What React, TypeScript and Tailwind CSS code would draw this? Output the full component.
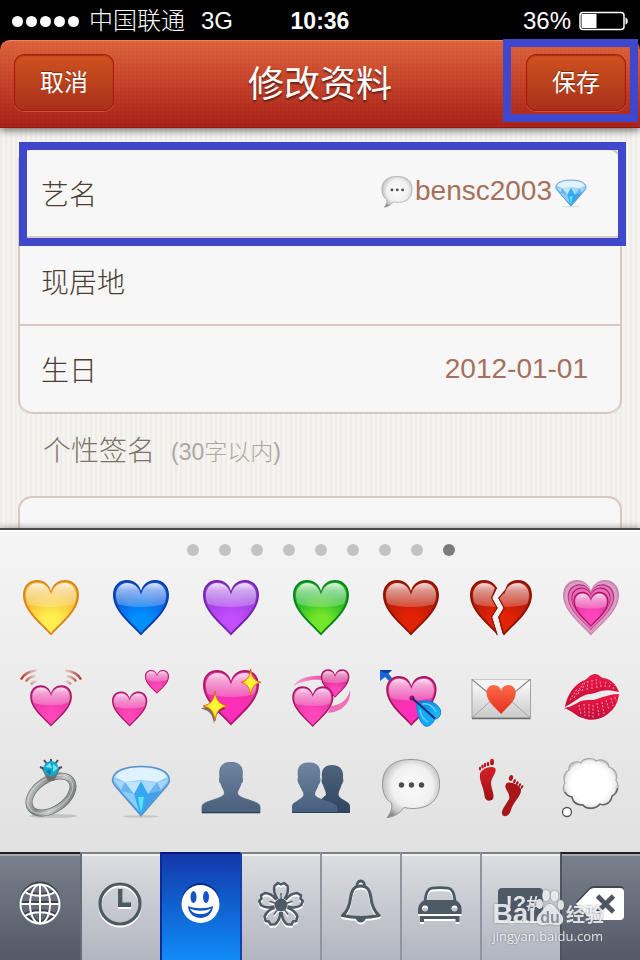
import { useId, type ReactNode } from "react";

type Palette = { edge: string; mid: string; glow: string };

const YELLOW: Palette = { edge: "#d9851a", mid: "#f3b82c", glow: "#ffee50" };
const BLUE: Palette = { edge: "#0a3cab", mid: "#0b5ce0", glow: "#0090fc" };
const PURPLE: Palette = { edge: "#7324ab", mid: "#9a3fdf", glow: "#c34cfb" };
const GREEN: Palette = { edge: "#0a841a", mid: "#18b422", glow: "#74e62a" };
const RED: Palette = { edge: "#8c1406", mid: "#b51a06", glow: "#e22205" };
const PINK: Palette = { edge: "#a4185f", mid: "#e637a4", glow: "#ff46ba" };

const HEART = "M32 60.5C24 51 4 37 4 20C4 11 10 5 18 5C25 5 30 9 32 16C34 9 39 5 46 5C54 5 60 11 60 20C60 37 40 51 32 60.5Z";
const HEART_INNER = "M32 58C25 49 6 36 6 20C6 12 11 7 18 7C25 7 30 11 32 19C34 11 39 7 46 7C53 7 58 12 58 20C58 36 39 49 32 58Z";
const HEART_GLOSS = "M7 20C7 13 12 8 18 8C25 8 30 12 32 20C34 12 39 8 46 8C52 8 57 13 57 20C57 24 56 27 55 29C44 33 20 33 9 29C8 27 7 24 7 20Z";

function HeartShape({ palette, transform }: { palette: Palette; transform?: string }) {
  const id = useId();
  return (
    <g transform={transform}>
      <defs>
        <radialGradient id={`${id}b`} cx="32" cy="48" r="32" gradientUnits="userSpaceOnUse">
          <stop offset="0" stopColor={palette.glow} />
          <stop offset="0.25" stopColor={palette.glow} />
          <stop offset="1" stopColor={palette.mid} />
        </radialGradient>
        <linearGradient id={`${id}g`} x1="0" y1="0" x2="0" y2="1">
          <stop offset="0" stopColor="#fff" stopOpacity="0.85" />
          <stop offset="0.3" stopColor="#fff" stopOpacity="0.55" />
          <stop offset="1" stopColor="#fff" stopOpacity="0.2" />
        </linearGradient>
      </defs>
      <path d={HEART} fill={palette.edge} />
      <path d={HEART_INNER} fill={`url(#${id}b)`} />
      <path d={HEART_GLOSS} fill={`url(#${id}g)`} />
    </g>
  );
}

function Art({ children, className = "w-16 h-16" }: { children: ReactNode; className?: string }) {
  return (
    <svg viewBox="0 0 64 64" className={`shrink-0 ${className}`} aria-hidden="true">
      {children}
    </svg>
  );
}

function BrokenHeart() {
  return (
    <Art>
      <defs>
        <clipPath id="crackLeft">
          <path d="M0 0H23L28 13L23 23L28.6 33L23 42L28.6 60V64H0Z" />
        </clipPath>
        <clipPath id="crackRight">
          <path d="M64 0H42L36 15L29.3 23L34.7 33L29.3 42L35 64H64Z" />
        </clipPath>
      </defs>
      <g clipPath="url(#crackLeft)">
        <HeartShape palette={RED} transform="translate(-3 0)" />
        <path d="M27.5 12L23 23L28.6 33L23 42L28.6 60" fill="none" stroke="#8c1406" strokeWidth="2" />
      </g>
      <g clipPath="url(#crackRight)">
        <HeartShape palette={RED} transform="translate(3 0)" />
        <path d="M36 15L29.3 23L34.7 33L29.3 42L34 58" fill="none" stroke="#8c1406" strokeWidth="2" />
      </g>
    </Art>
  );
}

function GrowingHeart() {
  return (
    <Art>
      <path d={HEART} fill="#c986ae" />
      <path d={HEART} fill="#df9cc5" transform="translate(2 2) scale(.94)" />
      <path d={HEART} fill="#a93a7c" transform="translate(5.4 5) scale(.83)" />
      <path d={HEART} fill="#e774ba" transform="translate(6.6 6.5) scale(.79)" />
      <path d={HEART} fill="#a6246d" transform="translate(9.6 9) scale(.7)" />
      <path d={HEART} fill="#ee6cba" transform="translate(10.6 10.4) scale(.67)" />
      <HeartShape palette={PINK} transform="translate(11.8 13.6) scale(.63)" />
    </Art>
  );
}

function BeatingHeart() {
  return (
    <Art>
      <defs>
        <linearGradient id="beatL">
          <stop offset="0" stopColor="#b03425" />
          <stop offset="1" stopColor="#b03425" stopOpacity="0.1" />
        </linearGradient>
        <linearGradient id="beatR">
          <stop offset="0" stopColor="#b03425" stopOpacity="0.1" />
          <stop offset="1" stopColor="#b03425" />
        </linearGradient>
      </defs>
      <g fill="none" stroke="url(#beatL)" strokeWidth="2.4">
        <path d="M2 14.5C5 9 11 6 18 5.5" />
        <path d="M7 16.5C9 13 12.5 11.5 17 11" strokeOpacity="0.75" />
        <path d="M12 19.5C13.5 17.5 15 16.5 18 16.2" strokeOpacity="0.5" />
      </g>
      <g fill="none" stroke="url(#beatR)" strokeWidth="2.4">
        <path d="M62 14.5C59 9 53 6 46 5.5" />
        <path d="M57 16.5C55 13 51.5 11.5 47 11" strokeOpacity="0.75" />
        <path d="M52 19.5C50.5 17.5 49 16.5 46 16.2" strokeOpacity="0.5" />
      </g>
      <HeartShape palette={PINK} transform="translate(8.2 16.5) scale(.745)" />
    </Art>
  );
}

function TwoHearts() {
  return (
    <Art>
      <HeartShape palette={PINK} transform="translate(34.2 2.8) scale(.43)" />
      <HeartShape palette={PINK} transform="translate(.5 23.4) scale(.63)" />
    </Art>
  );
}

function SparklingHeart() {
  return (
    <Art>
      <defs>
        <radialGradient id="spark">
          <stop offset="0" stopColor="#fffb3a" />
          <stop offset="0.6" stopColor="#ffe82a" />
          <stop offset="1" stopColor="#f08a10" />
        </radialGradient>
      </defs>
      <HeartShape palette={{ ...PINK, edge: "#b0196b", glow: "#ff2dbb" }} />
      <path d="M16 27C17.5 37 20 40 28 42.5C20 45 17.5 48 16 58C14.5 48 12 45 3 42.5C12 40 14.5 37 16 27Z" fill="#3d1710" opacity=".6" transform="translate(-1 1)" />
      <path d="M16 26C17.5 36 20 39 29 41C20 43 17.5 46 16 56C14.5 46 12 43 4 41C12 39 14.5 36 16 26Z" fill="url(#spark)" stroke="#d9660f" strokeWidth=".9" />
      <path d="M51.7 4C53 13 55 15.5 62 17.3C55 19 53 22 51.7 31C50.4 22 48 19 42 17.3C48 15.5 50.4 13 51.7 4Z" fill="url(#spark)" stroke="#d9660f" strokeWidth=".9" />
    </Art>
  );
}

function RevolvingHearts() {
  return (
    <Art>
      <defs>
        <linearGradient id="ribbon">
          <stop offset="0" stopColor="#f4a3cf" />
          <stop offset="1" stopColor="#ee4fae" />
        </linearGradient>
      </defs>
      <path d="M4 21.7C9 13 21 10 33 11V15C22 14 12 16 4 21.7Z" fill="url(#ribbon)" />
      <path d="M61 25C63 37 52 48 39 47.7L42 41C51 40 59 35 61 25Z" fill="#ee6fb9" />
      <HeartShape palette={{ ...PINK, mid: "#cf2488" }} transform="translate(29.8 1.8) scale(.51)" />
      <HeartShape palette={PINK} transform="translate(.3 17.5) scale(.735)" />
    </Art>
  );
}

function CupidHeart() {
  return (
    <Art>
      <defs>
        <linearGradient id="feather" x1="0" y1="0" x2="1" y2="1">
          <stop offset="0" stopColor="#0a78dc" />
          <stop offset="1" stopColor="#1fc4ff" />
        </linearGradient>
      </defs>
      <path d="M1 5H13L9.500 8.500L13 13L10 16L6 12L1 16Z" fill="#1767dc" />
      <path d="M1 5H13L9 8L5 8Z" fill="#0a3da0" />
      <HeartShape palette={{ ...PINK, glow: "#ff2dbb" }} transform="translate(3.600 6.600) scale(.9)" />
      <circle cx="33" cy="33" r="2.600" fill="#a01565" />
      <path d="M38 38C44 34 56 35 61 44C63 49 60 54 56 54Z" fill="url(#feather)" stroke="#0b83d8" />
      <path d="M38 38C37 44 40 58 46 61C51 62 54 58 56 54Z" fill="#12a9fa" stroke="#0b83d8" />
      <path d="M43 39C49 38 54 41 57 47M41 45C42 51 45 55 49 57" fill="none" stroke="#63d5ff" strokeWidth="1.5" />
      <path d="M33 33L56 53.5" stroke="#0a3278" strokeWidth="2" />
    </Art>
  );
}

function LoveLetter() {
  return (
    <Art>
      <defs>
        <linearGradient id="paper" x1="0" y1="0" x2="0" y2="1">
          <stop offset="0" stopColor="#fefefe" />
          <stop offset="1" stopColor="#c9c9c9" />
        </linearGradient>
        <linearGradient id="seal" x1="0" y1="0" x2="0" y2="1">
          <stop offset="0" stopColor="#ff6a48" />
          <stop offset="1" stopColor="#e0301c" />
        </linearGradient>
      </defs>
      <rect x="3" y="14.5" width="58.5" height="38.5" fill="url(#paper)" stroke="#a3a3a3" />
      <path d="M3 53L26 32M61 53L38 32" stroke="#a5a5a5" fill="none" />
      <path d="M3 14.5L30 37Q32 38.5 34 37L61 14.5" fill="#f4f4f4" stroke="#898989" strokeWidth="1.2" />
      <path d="M3 53.5H61.5" stroke="#6e6e6e" strokeWidth="1.5" />
      <path d={HEART} fill="url(#seal)" transform="translate(15.500 17.500) scale(.52)" />
    </Art>
  );
}

function KissMark() {
  return (
    <Art>
      <defs>
        <linearGradient id="lip" x1="0" y1="0" x2="0" y2="1">
          <stop offset="0" stopColor="#ec1848" />
          <stop offset="1" stopColor="#c20f3a" />
        </linearGradient>
      </defs>
      <path d="M6 42C8 30 15 19 26 15C29 13 32 9 36 9C40 9 41 12 44 13C52 14 57 19 60 27C55 26 50 24 42 26C37 27 35 29 30 29C22 30 14 38 6 42Z" fill="url(#lip)" />
      <path d="M5 43C12 42 16 39 22 36C28 34 33 36 38 34C46 31 53 29 60 29C59 39 54 46 46 51C40 55 30 56 24 53C18 52 14 46 5 43Z" fill="url(#lip)" />
      <g stroke="#ffc2cf" strokeWidth=".9" strokeDasharray="2 1.5" fill="none" opacity=".85">
        <path d="M11 35L18 24M15 33L21 23M19 29L24 18M23 26L26 17M28 25L29 16M33 24L33 14M38 23L37 12M42 22L41 15M46 22L47 16M50 22L52 18M54 24L56 20" />
        <path d="M20 40L22 49M25 39L26 51M30 39L30 52M34 40L34 53M38 38L40 51M43 37L45 49M47 35L50 45M52 33L54 41M56 32L57 36" />
      </g>
    </Art>
  );
}

function Ring() {
  return (
    <Art>
      <defs>
        <linearGradient id="silver" x1="0" y1="0" x2="1" y2="1">
          <stop offset="0" stopColor="#d4d7d5" />
          <stop offset="0.35" stopColor="#858a87" />
          <stop offset="0.6" stopColor="#c3c7c5" />
          <stop offset="1" stopColor="#686c6a" />
        </linearGradient>
      </defs>
      <ellipse cx="34" cy="61" rx="24" ry="2" fill="#000" opacity=".15" />
      <g transform="rotate(-34 32 39.5)">
        <ellipse cx="32" cy="39.5" rx="24.5" ry="15" fill="none" stroke="#6c716e" strokeWidth="7" />
        <ellipse cx="32" cy="39.5" rx="24.5" ry="15" fill="none" stroke="url(#silver)" strokeWidth="5.4" />
        <ellipse cx="31.5" cy="39" rx="25" ry="15.5" fill="none" stroke="#e9ebea" strokeWidth="1" opacity=".5" />
      </g>
      <path d="M22 12L29 26H35L42 12L38 15L32 19L26 15Z" fill="#6c706e" />
      <path d="M25 5L28 9M32 4V7M39 5L36 9M21 12L26 14M43 12L38 14" stroke="#4c4f4e" strokeWidth="2" />
      <circle cx="32" cy="13.5" r="7.5" fill="#12a9cf" />
      <path d="M26 12L31 8L33 13ZM34 9L39 13L34 17Z" fill="#6fe4f5" />
      <path d="M27 16L32 15L31 20Z" fill="#0673a0" />
    </Art>
  );
}

function Gem({ className }: { className?: string }) {
  const id = useId();
  return (
    <Art className={className}>
      <defs>
        <linearGradient id={id} x1="0" y1="0" x2="0" y2="1">
          <stop offset="0" stopColor="#cdeeff" />
          <stop offset="0.45" stopColor="#5cb8f4" />
          <stop offset="1" stopColor="#1fb4f5" />
        </linearGradient>
      </defs>
      <ellipse cx="32" cy="61.5" rx="18" ry="1.3" fill="#000" opacity=".12" />
      <path d="M3.5 25C4 15 18 11.5 32 11.5C46 11.5 60 15 60.5 25C60.5 28 58 30.500 56 33L32 60.5L8 33C6 30.500 3.500 28 3.500 25Z" fill={`url(#${id})`} stroke="#5b8fc9" strokeWidth="1.5" />
      <path d="M6 22C11 14 22 13 32 13C42 13 53 14 58 22L48 27L32 25L16 27Z" fill="#dff3ff" />
      <path d="M5 25L16 27L12 35Z" fill="#a8d5fa" />
      <path d="M59 25L48 27L52 35Z" fill="#a8d5fa" />
      <path d="M16 27L26 38L12 36Z" fill="#6cb5f1" />
      <path d="M48 27L38 38L52 36Z" fill="#6cb5f1" />
      <path d="M32 26L40 39L32 58L24 39Z" fill="#34a8f0" />
      <path d="M16 27L32 26L25 39Z" fill="#c2e4fb" />
      <path d="M48 27L32 26L39 39Z" fill="#a8d8f9" />
      <path d="M12 36L25 39L30 56Z" fill="#8ccdf8" />
      <path d="M52 36L39 39L34 56Z" fill="#439fe9" />
      <path d="M29 42H35L32 58Z" fill="#5ce2ff" />
    </Art>
  );
}

const BUST = "M3 58V52C3 49 6 47.5 11 46C18 43.5 25 42 25.5 38C25.500 35 23 33 22 28.5C20.500 28 20 24 21 22C19.500 12 23 7.500 32 7.500C41 7.500 44.500 12 43 22C44 24 43.500 28 42 28.5C41 33 38.500 35 38.500 38C39 42 46 43.500 53 46C58 47.500 61 49 61 52V58Z";

function Person() {
  return (
    <Art>
      <defs>
        <linearGradient id="bust" x1="0" y1="0" x2="0" y2="1">
          <stop offset="0" stopColor="#6f86a3" />
          <stop offset="1" stopColor="#475e7b" />
        </linearGradient>
      </defs>
      <path d={BUST} fill="url(#bust)" stroke="#52677f" strokeWidth=".8" />
      <path d="M3 57.5H61" stroke="#2d4059" />
    </Art>
  );
}

function People() {
  return (
    <Art>
      <defs>
        <linearGradient id="bustBack" x1="0" y1="0" x2="0" y2="1">
          <stop offset="0" stopColor="#4d637e" />
          <stop offset="1" stopColor="#30445e" />
        </linearGradient>
      </defs>
      <path d="M30 58V46L37 40C37 36 35 34 34 30C32.500 28 32 25 33 23C32 15 35 10 43 10C51 10 55 15 54 23C55 25 54 28 52.500 30C51.500 34 49.500 36 49.500 40C51 45 61 46 61 51V58Z" fill="url(#bustBack)" />
      <path d="M3 58V50C6 46 13 44 14.500 40C14.500 36 11.500 34 10.500 30C8.500 28 8 24 9 22C7.500 12 11 7.500 20 7.500C29 7.500 32.500 12 31 22C32 24 31.500 28 29.500 30C28.500 34 26 36 26 40C30 45 42 46 47 50C48.500 52 48.500 54 48.500 58Z" fill="url(#bust)" />
      <path d="M3 57.5H61" stroke="#2d4059" />
    </Art>
  );
}

function SpeechBubble({ className }: { className?: string }) {
  const id = useId();
  return (
    <Art className={className}>
      <defs>
        <radialGradient id={id} cx="0.52" cy="0.46" r="0.6">
          <stop offset="0" stopColor="#fcfcfc" />
          <stop offset="0.6" stopColor="#f0f0f0" />
          <stop offset="0.85" stopColor="#c4c4c4" />
          <stop offset="1" stopColor="#8c8c8c" />
        </radialGradient>
      </defs>
      <path d="M32 4.5C50 4.5 60.5 13 60.5 29C60.5 45 50 53.5 34 53.5C30 53.5 28 53 25 52.5C21 58 15 62 8 62.5C12 58 13.5 53 12.5 48C6 44 3.5 37 3.5 29C3.5 13 14 4.5 32 4.5Z" fill={`url(#${id})`} stroke="#969696" />
      <circle cx="22.5" cy="30" r="2.7" fill="#4d4d4d" />
      <circle cx="32.5" cy="30" r="2.7" fill="#4d4d4d" />
      <circle cx="42.5" cy="30" r="2.7" fill="#4d4d4d" />
    </Art>
  );
}

function Footprints() {
  return (
    <Art>
      <defs>
        <linearGradient id="foot" x1="0" y1="0" x2="0" y2="1">
          <stop offset="0" stopColor="#d81f26" />
          <stop offset="1" stopColor="#9c1117" />
        </linearGradient>
      </defs>
      <g fill="url(#foot)">
        <path d="M11 19C12 14 22 10 26 13C29 16 22 23 22 28C22 33 26 40 24 44C21 47 16 46 15.5 41C15 33 10 26 11 19Z" />
        <ellipse cx="23" cy="7" rx="2" ry="3.2" />
        <ellipse cx="19" cy="9" rx="1.3" ry="2.3" />
        <ellipse cx="16" cy="10" rx="1.2" ry="2.2" />
        <ellipse cx="13.5" cy="11.5" rx="1.2" ry="2.1" />
        <ellipse cx="11" cy="13.5" rx="1.1" ry="2" />
      </g>
      <g fill="#a8161c">
        <path d="M37 29C40 25 50 30 52 34C53 41 44 47 42 55C41 60 36 63 33.5 60C31 56 37 50 40 44C42 38 34 34 37 29Z" />
        <ellipse cx="42" cy="23" rx="2" ry="3" transform="rotate(20 42 23)" />
        <ellipse cx="45.5" cy="26" rx="1.2" ry="2.2" transform="rotate(25 45 26)" />
        <ellipse cx="48.2" cy="28" rx="1.2" ry="2.1" transform="rotate(30 48 28)" />
        <ellipse cx="50.7" cy="29.8" rx="1.1" ry="2" transform="rotate(30 50 30)" />
        <ellipse cx="53" cy="32" rx="1.1" ry="1.9" transform="rotate(30 53 32)" />
      </g>
    </Art>
  );
}

function ThoughtBubble() {
  return (
    <Art>
      <defs>
        <radialGradient id="cloud">
          <stop offset="0.7" stopColor="#fff" />
          <stop offset="0.9" stopColor="#f0f0f0" />
          <stop offset="1" stopColor="#c4c4c4" />
        </radialGradient>
      </defs>
      <path d="M22 8C24 3 34 2 37 6C43 3 50 7 50 12C57 14 59 21 57 25C61 31 59 39 53 41C53 48 45 52 41 49C36 56 26 54 24 50C17 51 13 47 13 42C5 41 2 33 6 28C3 21 7 16 10 15C9 8 17 5 22 8Z" fill="url(#cloud)" stroke="#a8a8a8" strokeWidth="1.2" />
      <path d="M6 37C8 41 10 41.500 13 42C14 47 18 50 24 50C27 54 36 55 41 49C46 51 52 48 53 41C57 39 58 36 58.500 33" fill="none" stroke="#5e5e5e" strokeWidth="1.3" />
      <circle cx="8" cy="57" r="4.5" fill="#fff" stroke="#555" strokeWidth="1.3" />
    </Art>
  );
}

const emojis: { label: string; art: ReactNode }[] = [
  { label: "黄心", art: <Art><HeartShape palette={YELLOW} /></Art> },
  { label: "蓝心", art: <Art><HeartShape palette={BLUE} /></Art> },
  { label: "紫心", art: <Art><HeartShape palette={PURPLE} /></Art> },
  { label: "绿心", art: <Art><HeartShape palette={GREEN} /></Art> },
  { label: "红心", art: <Art><HeartShape palette={RED} /></Art> },
  { label: "心碎", art: <BrokenHeart /> },
  { label: "搏动的心", art: <GrowingHeart /> },
  { label: "心跳", art: <BeatingHeart /> },
  { label: "两颗心", art: <TwoHearts /> },
  { label: "闪亮的心", art: <SparklingHeart /> },
  { label: "旋转的心", art: <RevolvingHearts /> },
  { label: "丘比特", art: <CupidHeart /> },
  { label: "情书", art: <LoveLetter /> },
  { label: "唇印", art: <KissMark /> },
  { label: "戒指", art: <Ring /> },
  { label: "钻石", art: <Gem /> },
  { label: "人影", art: <Person /> },
  { label: "两个人影", art: <People /> },
  { label: "对话气泡", art: <SpeechBubble /> },
  { label: "脚印", art: <Footprints /> },
  { label: "思想气泡", art: <ThoughtBubble /> },
];

function KeyIcon({ children, className }: { children: ReactNode; className: string }) {
  return (
    <svg viewBox="0 0 48 48" className={`w-12 h-12 overflow-visible ${className}`} aria-hidden="true">
      {children}
    </svg>
  );
}

const RAISED = "text-white drop-shadow-[0_-2px_0_rgba(0,0,0,0.4)]";
const ENGRAVED = "text-[#4e5966] drop-shadow-[0_2px_0_#fff]";
const LIGHT_KEY = "bg-linear-to-b from-[#dcdee2] to-[#b1b5bf] border-t-[#828282] shadow-[inset_0_2px_0_#f0f1f3]";
const DARK_KEY = "bg-linear-to-b from-[#7a818d] to-[#535966] border-t-[#222] shadow-[inset_0_2px_0_#a5a9b1]";

const keys: { label: string; style: string; icon: ReactNode }[] = [
  {
    label: "切换键盘",
    style: DARK_KEY,
    icon: (
      <KeyIcon className={RAISED}>
        <g fill="none" stroke="currentColor" strokeWidth="2">
          <circle cx="24" cy="24" r="19.5" />
          <ellipse cx="24" cy="24" rx="10" ry="19.5" />
          <path d="M24 4.5V43.5M4.5 24H43.5M9 12C16 17 32 17 39 12M9 36C16 31 32 31 39 36" />
        </g>
      </KeyIcon>
    ),
  },
  {
    label: "最近使用",
    style: `border-l-2 border-l-[#666c78] ${LIGHT_KEY}`,
    icon: (
      <KeyIcon className={ENGRAVED}>
        <circle cx="23" cy="24" r="20" fill="none" stroke="currentColor" strokeWidth="3.2" />
        <path d="M21 9H25.5V22.5H34V27H21Z" fill="currentColor" />
      </KeyIcon>
    ),
  },
  {
    label: "表情",
    style: "border-l-2 border-l-[#0c2b94] border-t-[#06187c] bg-linear-to-b from-[#1338ab] to-[#108bf7]",
    icon: (
      <KeyIcon className="text-white drop-shadow-[0_-2px_0_#0a2a80]">
        <circle cx="23.5" cy="24" r="19" fill="currentColor" />
        <ellipse cx="16.5" cy="17" rx="3" ry="6" fill="#1455c4" />
        <ellipse cx="29" cy="17" rx="3" ry="6" fill="#1455c4" />
        <path d="M11 26C18 29 29 29 36 26C36 33 30 38 23.5 38C17 38 11 33 11 26Z" fill="#1455c4" />
        <path d="M13 28.500C19 31.500 28 31.500 34 28.500C32 33 28 34 23.5 34C19 34 15 33 13 28.500Z" fill="#fff" />
      </KeyIcon>
    ),
  },
  {
    label: "自然",
    style: `border-l-2 border-l-[#153fa9] ${LIGHT_KEY}`,
    icon: (
      <KeyIcon className={ENGRAVED}>
        {[0, 72, 144, 216, 288].map((deg) => (
          <g key={deg} transform={`rotate(${deg} 24 25)`}>
            <path d="M20.5 19C17.5 15 16.5 10 17.5 6L21 3L24 4.5L27 3L30.5 6C31.5 10 30.5 15 27.5 19" fill="none" stroke="currentColor" strokeWidth="2.5" strokeLinejoin="round" />
            <path d="M24 20V13" stroke="currentColor" strokeWidth="1.4" />
          </g>
        ))}
        <circle cx="24" cy="25" r="6.5" fill="currentColor" />
      </KeyIcon>
    ),
  },
  {
    label: "物品",
    style: `border-l-2 border-l-[#8f949f] ${LIGHT_KEY}`,
    icon: (
      <KeyIcon className={ENGRAVED}>
        <path d="M20 7C19 -1 28.5 -1 27.5 7" fill="none" stroke="currentColor" strokeWidth="2.8" />
        <path d="M23.7 6C31 6 33 11 34 18C35 27 38 32 42 35.5C32 38 16 38 5.5 35.5C10 32 12.5 27 13.5 18C14.5 11 16.5 6 23.7 6Z" fill="none" stroke="currentColor" strokeWidth="3" strokeLinejoin="round" />
        <path d="M18.5 38H29C28 41 26 42.5 23.7 42.5C21.5 42.5 19.5 41 18.5 38Z" fill="currentColor" />
      </KeyIcon>
    ),
  },
  {
    label: "交通",
    style: `border-l-2 border-l-[#8f949f] ${LIGHT_KEY}`,
    icon: (
      <KeyIcon className={ENGRAVED}>
        <path d="M8 21C9 12 11 8.5 15 8.2C20 7.5 26 7.5 31 8.2C35 8.5 37 12 38 21" fill="none" stroke="currentColor" strokeWidth="2.8" />
        <path fillRule="evenodd" d="M8 20H38C43 22 44.7 26 44.7 30V34H1V30C1 26 3 22 8 20ZM8 25.5A3 3 0 1 0 8 31.5A3 3 0 1 0 8 25.5ZM37.5 25.5A3 3 0 1 0 37.5 31.5A3 3 0 1 0 37.5 25.5Z" fill="currentColor" />
        <path d="M3 36H42.5V42H38.5V39H7V42H3Z" fill="currentColor" />
      </KeyIcon>
    ),
  },
  {
    label: "符号",
    style: `border-l-2 border-l-[#8f949f] ${LIGHT_KEY}`,
    icon: (
      <KeyIcon className={ENGRAVED}>
        <rect x="1" y="8" width="45" height="33" rx="4" fill="currentColor" />
        <text x="25" y="31" textAnchor="middle" fontSize="22" fontWeight="700" fill="#e3e5e8">!?#</text>
      </KeyIcon>
    ),
  },
  {
    label: "删除",
    style: `border-l-2 border-l-[#4d535f] ${DARK_KEY}`,
    icon: (
      <KeyIcon className={RAISED}>
        <path d="M-1 24L13 9.5Q14.5 8 17 8H43Q47 8 47 12V36Q47 40 43 40H17Q14.5 40 13 38.5Z" fill="currentColor" />
        <path d="M20.5 16L36.5 32M36.5 16L20.5 32" stroke="#4f5663" strokeWidth="4.8" />
      </KeyIcon>
    ),
  },
];

function Watermark() {
  return (
    <div className="absolute right-9 bottom-3.5 text-white/80 drop-shadow-[0_0_1px_rgba(90,95,105,0.9)] pointer-events-none">
      <div className="flex items-end h-9">
        <span className="text-[28px] leading-6 font-bold">Bai</span>
        <svg viewBox="0 0 28 36" className="w-7 h-9" aria-hidden="true">
          <g fill="currentColor">
            <ellipse cx="10" cy="5.5" rx="3.8" ry="5.5" />
            <ellipse cx="18.5" cy="6" rx="3.8" ry="5.5" />
            <ellipse cx="3.5" cy="14" rx="3.500" ry="5" />
            <ellipse cx="25" cy="15" rx="3" ry="5" />
            <path d="M14 14C19 14 20 20 25 24C30 30 26 36 20 35C16 34 12 34 8 35C2 36 -2 30 3 24C8 20 9 14 14 14Z" />
          </g>
          <text x="14" y="33" textAnchor="middle" fontSize="16" fontWeight="700" fill="#8b919c">du</text>
        </svg>
        <span className="ml-0.5 text-[19px] leading-5 font-bold">经验</span>
      </div>
      <div className="text-[13px] leading-5 font-['Open_Sans',sans-serif]">jingyan.baidu.com</div>
    </div>
  );
}

function StatusBar() {
  return (
    <div className="grid grid-cols-[1fr_auto_1fr] items-center h-10 px-3 pt-0.5 bg-black text-white text-2xl">
      <div className="flex items-center">
        <div className="flex gap-[3px]">
          {[0, 1, 2, 3, 4].map((dot) => (
            <span key={dot} className="w-[11px] h-[11px] rounded-full bg-white" />
          ))}
        </div>
        <span className="ml-2.5 font-light">中国联通</span>
        <span className="ml-4">3G</span>
      </div>
      <div className="text-[23px] font-bold">10:36</div>
      <div className="flex items-center justify-end gap-2">
        <span>36%</span>
        <svg viewBox="0 0 49 20" className="w-[49px] h-5" aria-hidden="true">
          <rect x="1" y="1.5" width="44" height="17" rx="3" fill="none" stroke="#fff" strokeWidth="1.5" />
          <rect x="2.5" y="3" width="15" height="14" fill="#fff" />
          <path d="M46.5 6.5C49.5 7 49.5 13 46.5 13.5Z" fill="#fff" />
        </svg>
      </div>
    </div>
  );
}

const NAV_BUTTON = "w-[100px] h-[57px] pt-0.5 rounded-[10px] border border-[#a5170f] bg-linear-to-b from-[#d0521f] to-[#a8301a] shadow-[inset_0_1px_1px_rgba(140,20,10,0.5),0_1px_0_rgba(255,140,110,0.4)] text-2xl [text-shadow:0_-1px_1px_rgba(0,0,0,0.4)]";

function Header() {
  return (
    <div className="bg-black relative z-10 shadow-[0_2px_8px_rgba(0,0,0,0.6)]">
      <header className="flex items-center justify-between h-[88px] px-3.5 pb-1 rounded-t-[10px] text-white border-t border-[#ee8560] border-b border-b-[#8e180e] bg-[repeating-linear-gradient(0deg,rgba(255,255,255,0.02)_0_2px,transparent_2px_4px),repeating-linear-gradient(90deg,rgba(120,0,0,0.04)_0_2px,transparent_2px_4px),linear-gradient(#dd633a,#c54128_50%,#a82018)]">
        <button className={NAV_BUTTON}>取消</button>
        <h1 className="pt-1.5 text-4xl [text-shadow:0_2px_2px_rgba(0,0,0,0.5)]">修改资料</h1>
        <div className="relative">
          <button className={NAV_BUTTON}>保存</button>
          <div className="absolute -top-[15px] -bottom-[11px] -left-[23px] -right-3 border-8 border-[#3f48cc] pointer-events-none" />
        </div>
      </header>
    </div>
  );
}

const ROW = "flex items-center h-[88px] pl-[21px] pr-8 border-b-2 border-[#d6c9c1]";
const LABEL = "pt-1.5 font-light";
const VALUE = "bg-transparent text-right text-[28px] text-[#a5705c] outline-none";

function ProfileForm() {
  return (
    <form className="flex-1 min-h-0 overflow-hidden px-[18px] pt-5 text-[28px] text-[#4a3d34] bg-[#f4f3ef] bg-[repeating-linear-gradient(90deg,#eeede9_0_2px,transparent_2px_5px)]">
      <div className="relative rounded-[14px] border-2 border-b-0 border-[#d6c9c1] bg-[#f7f7f7]">
        <div className={ROW}>
          <label htmlFor="nickname" className={LABEL}>艺名</label>
          <div className="flex items-center flex-1 justify-end pb-1">
            <SpeechBubble className="w-[34px] h-[34px]" />
            <input id="nickname" className={`w-[138px] ${VALUE}`} defaultValue="bensc2003" />
            <Gem className="w-[34px] h-[34px] ml-0.5" />
          </div>
        </div>
        <div className={ROW}>
          <label htmlFor="city" className={LABEL}>现居地</label>
          <input id="city" className={`flex-1 min-w-0 ${VALUE}`} />
        </div>
        <div className={`rounded-b-[14px] ${ROW}`}>
          <label htmlFor="birthday" className={LABEL}>生日</label>
          <input id="birthday" className={`flex-1 min-w-0 ${VALUE}`} defaultValue="2012-01-01" />
        </div>
        <div className="absolute -top-2 -left-px -right-1.5 h-[104px] border-8 border-[#3f48cc] pointer-events-none" />
      </div>
      <label htmlFor="signature" className="flex items-center gap-4 h-10 mt-[18px] mb-6 pl-[25px] font-light text-[#7d7169]">
        个性签名
        <span className="text-[23px] text-[#aaa8a5]">(30字以内)</span>
      </label>
      <textarea id="signature" className="block w-full h-40 p-6 resize-none rounded-[14px] border-2 border-[#d6c9c1] bg-[#f7f7f7] outline-none" />
    </form>
  );
}

function EmojiKeyboard() {
  return (
    <div className="relative z-10">
      <div className="border-t-2 border-[#4a4b4f] shadow-[inset_0_2px_0_#fff,0_-2px_5px_rgba(0,0,0,0.25)] bg-linear-to-b from-[#f5f5f5] to-[#e1e1e1] pl-1.5 pr-1 pt-3.5 pb-5">
        <div className="flex justify-center gap-5 pb-1.5">
          {[1, 2, 3, 4, 5, 6, 7, 8, 9].map((page) => (
            <button
              key={page}
              aria-label={`第${page}页`}
              className={`w-3 h-3 rounded-full ${page === 9 ? "bg-[#7b7b7b]" : "bg-[#c3c3c3]"}`}
            />
          ))}
        </div>
        <div className="grid grid-cols-7">
          {emojis.map((emoji) => (
            <button key={emoji.label} aria-label={emoji.label} className="flex items-center justify-center h-[90px]">
              {emoji.art}
            </button>
          ))}
        </div>
      </div>
      <div className="grid grid-cols-8">
        {keys.map((key) => (
          <button
            key={key.label}
            aria-label={key.label}
            className={`flex justify-center pt-[26px] pb-8 border-t-2 ${key.style}`}
          >
            {key.icon}
          </button>
        ))}
      </div>
      <Watermark />
    </div>
  );
}

export default function App() {
  return (
    <div className="flex flex-col h-screen overflow-hidden font-['Liberation_Sans','Noto_Sans_CJK_SC',sans-serif]">
      <StatusBar />
      <Header />
      <ProfileForm />
      <EmojiKeyboard />
    </div>
  );
}
